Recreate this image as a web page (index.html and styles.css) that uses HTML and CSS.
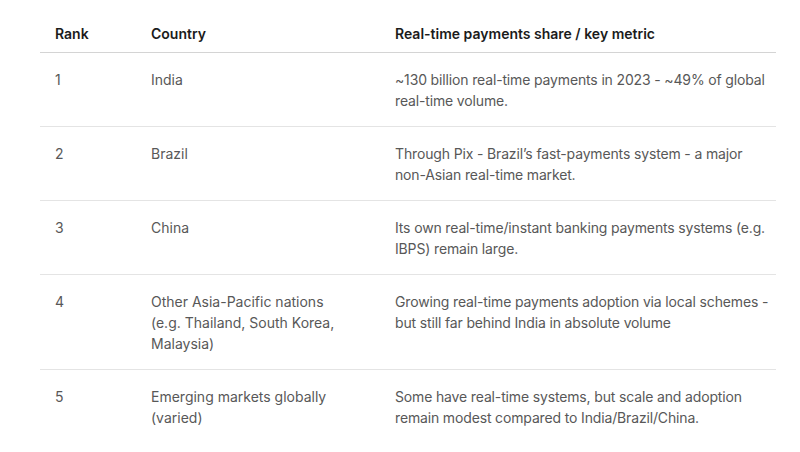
FILE: index.html
```html
<!DOCTYPE html>
<html>
<head>
<meta charset="utf-8">
<link rel="stylesheet" href="styles.css">
</head>
<body>
<table class="data">
  <thead>
    <tr><th class="c-rank">Rank</th><th class="c-country">Country</th><th class="c-metric">Real-time payments share / key metric</th></tr>
  </thead>
  <tbody>
    <tr><td>1</td><td>India</td><td>~130 billion real-time payments in 2023 - ~49% of global real-time volume.</td></tr>
    <tr><td>2</td><td>Brazil</td><td>Through Pix - Brazil’s fast-payments system - a major <span class="nw">non-Asian</span> real-time market.</td></tr>
    <tr><td>3</td><td>China</td><td>Its own real-time/instant banking payments systems (e.g. IBPS) remain large.</td></tr>
    <tr><td>4</td><td>Other Asia-Pacific nations (e.g. Thailand, South Korea, Malaysia)</td><td>Growing real-time payments adoption via local schemes - but still far behind India in absolute volume</td></tr>
    <tr><td>5</td><td>Emerging markets globally (varied)</td><td>Some have real-time systems, but scale and adoption remain modest compared to India/Brazil/China.</td></tr>
  </tbody>
</table>
</body>
</html>
```
FILE: styles.css
```css
html, body { margin: 0; padding: 0; background: #fff; }
body { padding: 15px 24px 0 40px; font-family: Inter, "Noto Sans", sans-serif; }
.data { border-collapse: collapse; width: 736px; table-layout: fixed; font-size: 14px; line-height: 21px; }
.data th, .data td { box-sizing: border-box; }
.c-rank { width: 96px; }
.c-country { width: 244px; }
.c-metric { width: 396px; }
th { text-align: left; font-weight: 600; color: #1b1b1b; padding: 8px 0 8px 15px; border-bottom: 1px solid #d4d4d4; }
td { vertical-align: top; color: #585858; padding: 16px 0 15px 15px; border-bottom: 1px solid #e4e4e4; }
tbody tr:last-child td { border-bottom: none; }
td:nth-child(2) { padding-right: 40px; }
td:nth-child(3) { letter-spacing: -0.15px; }
.nw { white-space: nowrap; }
```
